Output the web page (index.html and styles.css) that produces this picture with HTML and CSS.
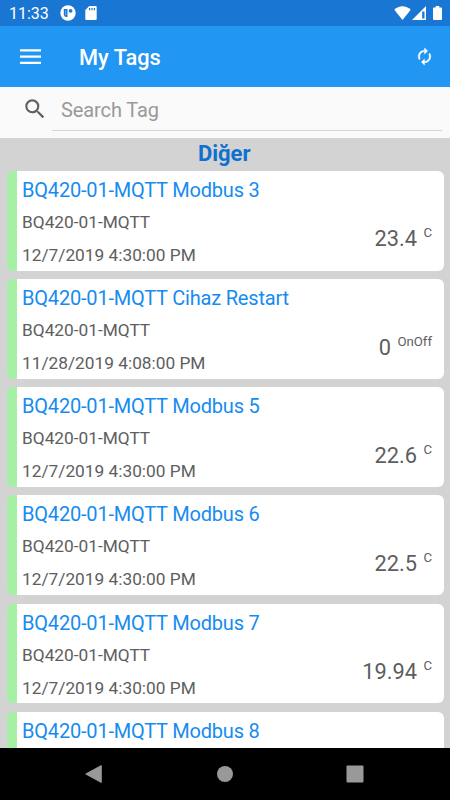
FILE: index.html
```html
<!DOCTYPE html>
<html lang="en">
<head>
  <meta charset="UTF-8" />
  <meta name="viewport" content="width=device-width, initial-scale=1" />
  <title>My Tags</title>
  <link rel="stylesheet" href="styles.css">
</head>
<body>

  <!-- Status bar -->
  <div class="status-bar">
    <span class="clock">11:33</span>
    <svg class="icon-app" width="16" height="16" viewBox="0 0 16 16">
      <circle cx="8" cy="8" r="7.7" fill="#fff" />
      <path d="M3.800 4h3.700v8H6.200a2.400 2.400 0 0 1-2.400-2.400z" fill="#1976d2" />
      <path d="M5.200 5.200h1v5.400h-1z" fill="#fff" opacity=".4" />
      <circle cx="10.600" cy="5.800" r="1.900" fill="#1976d2" />
    </svg>
    <svg class="icon-sd" width="12" height="14" viewBox="0 0 12 14">
      <path d="M4.300 0H10.700a1 1 0 0 1 1 1v12a1 1 0 0 1-1 1H1.300a1 1 0 0 1-1-1V4z" fill="#fff" />
      <path d="M4.600 2v2.300M7 2v2.300M9.400 2v2.300" stroke="#1976d2" stroke-width="1.200" />
    </svg>
    <svg class="icon-wifi" width="17" height="14" viewBox="0 0 17 14">
      <path d="M8.500 14L.3 3.700C2.500 1.400 5.400.2 8.500.2s6 1.200 8.200 3.500z" fill="#fff" />
    </svg>
    <svg class="icon-signal" width="14" height="14" viewBox="0 0 14 14">
      <path d="M0 14L14 0V14zM10.200 5.600V12.500H12.500V5.600z" fill="#fff" fill-rule="evenodd" />
    </svg>
    <svg class="icon-battery" width="9" height="14" viewBox="0 0 9 14">
      <path d="M2.700 0h3.600v1.400H8a1 1 0 0 1 1 1V13a1 1 0 0 1-1 1H1a1 1 0 0 1-1-1V2.400a1 1 0 0 1 1-1h1.700z" fill="#fff" />
    </svg>
  </div>

  <header class="app-bar">
    <svg class="icon-menu" width="21" height="15" viewBox="0 0 21 15">
      <path d="M0 1.300h21M0 7.600h21M0 13.800h21" stroke="#fff" stroke-width="2.300" />
    </svg>
    <h1>My Tags</h1>
    <svg class="icon-sync" width="19" height="19" viewBox="0 0 24 24">
      <path d="M12 6v3l4-4-4-4v3c-4.420 0-8 3.580-8 8 0 1.570.46 3.030 1.240 4.260L6.700 14.800c-.45-.83-.7-1.790-.7-2.800 0-3.310 2.690-6 6-6zm6.760 1.740L17.300 9.200c.44.84.7 1.790.7 2.800 0 3.310-2.690 6-6 6v-3l-4 4 4 4v-3c4.420 0 8-3.580 8-8 0-1.570-.46-3.030-1.240-4.260z" fill="#fff" stroke="#fff" stroke-width=".4" />
    </svg>
  </header>

  <div class="search-bar">
    <svg width="26" height="26" viewBox="0 0 24 24">
      <path d="M15.500 14h-.79l-.28-.27A6.471 6.471 0 0 0 16 9.500 6.500 6.500 0 1 0 9.500 16c1.610 0 3.090-.59 4.230-1.570l.27.28v.79l5 4.990L20.490 19l-4.990-5zm-6 0C7.010 14 5 11.990 5 9.500S7.010 5 9.500 5 14 7.010 14 9.500 11.990 14 9.500 14z" fill="#616161" />
    </svg>
    <input type="text" placeholder="Search Tag" />
  </div>

  <main class="tag-list">
    <h2>Diğer</h2>

    <div class="tag">
      <div class="info">
        <h3>BQ420-01-MQTT Modbus 3</h3>
        <p>BQ420-01-MQTT</p>
        <p>12/7/2019 4:30:00 PM</p>
      </div>
      <div class="reading"><span class="value">23.4</span><span class="unit">C</span></div>
    </div>

    <div class="tag">
      <div class="info">
        <h3>BQ420-01-MQTT Cihaz Restart</h3>
        <p>BQ420-01-MQTT</p>
        <p>11/28/2019 4:08:00 PM</p>
      </div>
      <div class="reading"><span class="value">0</span><span class="unit">OnOff</span></div>
    </div>

    <div class="tag">
      <div class="info">
        <h3>BQ420-01-MQTT Modbus 5</h3>
        <p>BQ420-01-MQTT</p>
        <p>12/7/2019 4:30:00 PM</p>
      </div>
      <div class="reading"><span class="value">22.6</span><span class="unit">C</span></div>
    </div>

    <div class="tag">
      <div class="info">
        <h3>BQ420-01-MQTT Modbus 6</h3>
        <p>BQ420-01-MQTT</p>
        <p>12/7/2019 4:30:00 PM</p>
      </div>
      <div class="reading"><span class="value">22.5</span><span class="unit">C</span></div>
    </div>

    <div class="tag">
      <div class="info">
        <h3>BQ420-01-MQTT Modbus 7</h3>
        <p>BQ420-01-MQTT</p>
        <p>12/7/2019 4:30:00 PM</p>
      </div>
      <div class="reading"><span class="value">19.94</span><span class="unit">C</span></div>
    </div>

    <div class="tag">
      <div class="info">
        <h3>BQ420-01-MQTT Modbus 8</h3>
      </div>
    </div>
  </main>

  <!-- Android navigation buttons -->
  <nav class="nav-bar">
    <svg width="18" height="18" viewBox="0 0 18 18">
      <path d="M16.200 .8V17.200L1 9z" fill="#999" stroke="#999" stroke-width="1.200" stroke-linejoin="round" />
    </svg>
    <svg width="18" height="18" viewBox="0 0 18 18">
      <circle cx="9" cy="9" r="8" fill="#999" />
    </svg>
    <svg width="18" height="18" viewBox="0 0 18 18">
      <rect x=".5" y=".5" width="17" height="17" rx="1" fill="#999" />
    </svg>
  </nav>

</body>
</html>
```
FILE: styles.css
```css
* {
  box-sizing: border-box;
}

body {
  margin: 0;
  width: 450px;
  height: 800px;
  display: flex;
  flex-direction: column;
  overflow: hidden;
  font-family: Roboto, sans-serif;
  background: #d3d3d3;
}

h1, h2, h3, p {
  margin: 0;
}

svg {
  display: block;
  flex: none;
}

.status-bar {
  height: 26px;
  flex: none;
  display: flex;
  align-items: center;
  padding: 0 8px 0 9px;
  background: #1976d2;
  color: #fff;
}

.clock {
  width: 51px;
  padding-top: 1px;
  font-size: 16px;
  line-height: 26px;
}

.icon-sd {
  margin-left: 9px;
}

.icon-wifi {
  margin-left: auto;
}

.icon-signal {
  margin-left: 1px;
}

.icon-battery {
  margin-left: 7px;
}

.app-bar {
  height: 61px;
  flex: none;
  display: flex;
  align-items: center;
  padding: 0 16px 0 20px;
  background: #2196f3;
  color: #fff;
}

.app-bar h1 {
  margin-left: 38px;
  padding-top: 2px;
  font-size: 21.800px;
  font-weight: 500;
}

.icon-sync {
  margin-left: auto;
}

.search-bar {
  height: 51px;
  flex: none;
  display: flex;
  padding: 9px 8px 7px 22px;
  background: #fafafa;
}

.search-bar input {
  flex: 1;
  height: 35px;
  margin-left: 4px;
  padding: 0 9px 7px;
  border: none;
  border-bottom: 1px solid #d6d6d6;
  background: none;
  font-family: Roboto, sans-serif;
  font-size: 20px;
  letter-spacing: -0.1px;
  outline: none;
}

.search-bar input::placeholder {
  color: #999;
}

.tag-list {
  flex: 1;
  min-height: 0;
  overflow: hidden;
  padding: 0 6.500px 0 7px;
}

.tag-list h2 {
  height: 33.200px;
  padding-right: 2px;
  font-size: 22px;
  line-height: 32px;
  font-weight: 700;
  text-align: center;
  color: #1070d0;
}

.tag {
  height: 99.500px;
  margin-bottom: 8.600px;
  display: flex;
  justify-content: space-between;
  overflow: hidden;
  border-left: 10.500px solid #a5f0a5;
  border-radius: 6px;
  background: #fff;
}

.info {
  padding: 3px 0 0 5px;
}

.info h3 {
  font-size: 20px;
  line-height: 32px;
  letter-spacing: -0.190px;
  font-weight: 400;
  color: #168bf0;
}

.info p {
  font-size: 17.300px;
  line-height: 33px;
  color: #5e5e5e;
}

.reading {
  display: flex;
  align-items: flex-start;
  padding: 54.300px 11.500px 0 0;
  color: #5e5e5e;
}

.value {
  font-size: 21.800px;
  line-height: 28px;
}

.unit {
  margin-left: 6.500px;
  font-size: 13.200px;
  line-height: 16px;
}

.nav-bar {
  height: 52px;
  flex: none;
  display: flex;
  align-items: center;
  justify-content: space-between;
  padding: 0 86px 0 85px;
  background: #000;
}
```
